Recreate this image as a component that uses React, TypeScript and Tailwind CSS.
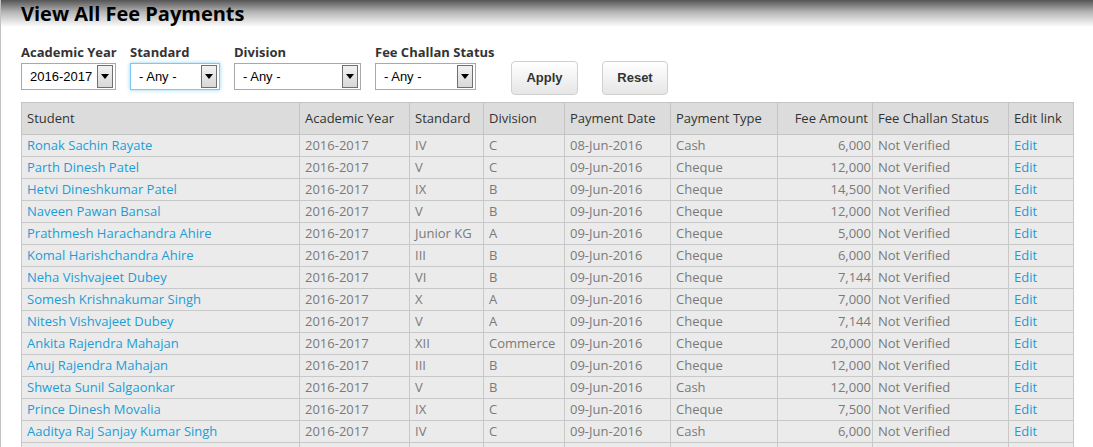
import React from 'react';

type Payment = {
  student: string;
  standard: string;
  division: string;
  date: string;
  type: string;
  amount: string;
};

const payments: Payment[] = [
  { student: 'Ronak Sachin Rayate', standard: 'IV', division: 'C', date: '08-Jun-2016', type: 'Cash', amount: '6,000' },
  { student: 'Parth Dinesh Patel', standard: 'V', division: 'C', date: '09-Jun-2016', type: 'Cheque', amount: '12,000' },
  { student: 'Hetvi Dineshkumar Patel', standard: 'IX', division: 'B', date: '09-Jun-2016', type: 'Cheque', amount: '14,500' },
  { student: 'Naveen Pawan Bansal', standard: 'V', division: 'B', date: '09-Jun-2016', type: 'Cheque', amount: '12,000' },
  { student: 'Prathmesh Harachandra Ahire', standard: 'Junior KG', division: 'A', date: '09-Jun-2016', type: 'Cheque', amount: '5,000' },
  { student: 'Komal Harishchandra Ahire', standard: 'III', division: 'B', date: '09-Jun-2016', type: 'Cheque', amount: '6,000' },
  { student: 'Neha Vishvajeet Dubey', standard: 'VI', division: 'B', date: '09-Jun-2016', type: 'Cheque', amount: '7,144' },
  { student: 'Somesh Krishnakumar Singh', standard: 'X', division: 'A', date: '09-Jun-2016', type: 'Cheque', amount: '7,000' },
  { student: 'Nitesh Vishvajeet Dubey', standard: 'V', division: 'A', date: '09-Jun-2016', type: 'Cheque', amount: '7,144' },
  { student: 'Ankita Rajendra Mahajan', standard: 'XII', division: 'Commerce', date: '09-Jun-2016', type: 'Cheque', amount: '20,000' },
  { student: 'Anuj Rajendra Mahajan', standard: 'III', division: 'B', date: '09-Jun-2016', type: 'Cheque', amount: '12,000' },
  { student: 'Shweta Sunil Salgaonkar', standard: 'V', division: 'B', date: '09-Jun-2016', type: 'Cash', amount: '12,000' },
  { student: 'Prince Dinesh Movalia', standard: 'IX', division: 'C', date: '09-Jun-2016', type: 'Cheque', amount: '7,500' },
  { student: 'Aaditya Raj Sanjay Kumar Singh', standard: 'IV', division: 'C', date: '09-Jun-2016', type: 'Cash', amount: '6,000' },
];

function SelectBox({ value, width, focused }: { value: string; width: string; focused?: boolean }) {
  return (
    <div
      className={`${width} h-[27px] flex items-center justify-between bg-white pl-2 pr-[2px] border ${
        focused ? 'border-[#7cc8ee] shadow-[0_0_4px_#8fd3f5]' : 'border-[#a9a9a9]'
      }`}
    >
      <span className="font-['Liberation_Sans',Arial,sans-serif] text-[13px] text-black">{value}</span>
      {/* classic dropdown arrow button */}
      <div className="w-[16px] h-[23px] border border-[#707070] bg-gradient-to-b from-[#f2f2f2] to-[#d8d8d8] flex items-center justify-center">
        <svg width="8" height="5" viewBox="0 0 8 5">
          <path d="M0 0h8L4 5z" fill="#000" />
        </svg>
      </div>
    </div>
  );
}

function Filter({ label, value, width, focused }: { label: string; value: string; width: string; focused?: boolean }) {
  return (
    <div className={`${width} flex flex-col gap-[2px]`}>
      <label className="text-[13px] leading-[18px] font-bold text-[#333] whitespace-nowrap">{label}</label>
      <SelectBox value={value} width={width} focused={focused} />
    </div>
  );
}

function Button({ children, width }: { children: React.ReactNode; width: string }) {
  return (
    <button
      className={`${width} mt-[18px] h-[34px] flex items-center justify-center rounded-[4px] border border-[#d0d0d0] bg-gradient-to-b from-white to-[#e6e6e6] font-['Liberation_Sans',Arial,sans-serif] text-[13px] font-bold text-[#333]`}
    >
      {children}
    </button>
  );
}

export default function App() {
  const th = 'h-[32px] border border-[#c4c4c4] px-[5px] text-left font-normal text-[#333]';
  const td = 'h-[22px] border border-[#c8c8c8] px-[5px] py-0 text-[#7a7a7a] whitespace-nowrap';

  return (
    <div className="min-h-screen bg-white bg-[linear-gradient(#555555,#b5b5b5_12px,#ffffff_27px)] bg-no-repeat font-['Open_Sans',sans-serif]">
      <div className="border-l border-[#c2c2c2] pl-[20px] pb-4">
        <h1 className="text-[20px] leading-[28px] font-bold text-black">View All Fee Payments</h1>

        {/* Filters */}
        <div className="mt-[15px] flex items-start">
          <Filter label="Academic Year" value="2016-2017" width="w-[95px]" />
          <div className="ml-[14px]">
            <Filter label="Standard" value="- Any -" width="w-[90px]" focused />
          </div>
          <div className="ml-[14px]">
            <Filter label="Division" value="- Any -" width="w-[127px]" />
          </div>
          <div className="ml-[14px]">
            <Filter label="Fee Challan Status" value="- Any -" width="w-[101px]" />
          </div>
          <div className="ml-[35px]">
            <Button width="w-[67px]">Apply</Button>
          </div>
          <div className="ml-[24px]">
            <Button width="w-[66px]">Reset</Button>
          </div>
        </div>

        {/* Payments table */}
        <table className="mt-[7px] border-collapse text-[13px] w-[1052px] table-fixed">
          <colgroup>
            <col className="w-[278px]" />
            <col className="w-[110px]" />
            <col className="w-[74px]" />
            <col className="w-[81px]" />
            <col className="w-[106px]" />
            <col className="w-[107px]" />
            <col className="w-[95px]" />
            <col className="w-[136px]" />
            <col className="w-[65px]" />
          </colgroup>
          <thead className="bg-[#dcdcdc]">
            <tr>
              <th className={th}>Student</th>
              <th className={th}>Academic Year</th>
              <th className={th}>Standard</th>
              <th className={th}>Division</th>
              <th className={th}>Payment Date</th>
              <th className={th}>Payment Type</th>
              <th className={`${th} text-right pr-[4px]`}>Fee Amount</th>
              <th className={th}>Fee Challan Status</th>
              <th className={th}>Edit link</th>
            </tr>
          </thead>
          <tbody className="bg-[#ebebeb]">
            {payments.map((p, i) => (
              <tr key={i}>
                <td className={td}>
                  <a href="#" className="text-[#1b9dd6]">{p.student}</a>
                </td>
                <td className={td}>2016-2017</td>
                <td className={td}>{p.standard}</td>
                <td className={td}>{p.division}</td>
                <td className={td}>{p.date}</td>
                <td className={td}>{p.type}</td>
                <td className={`${td} text-right pr-px`}>{p.amount}</td>
                <td className={td}>Not Verified</td>
                <td className={td}>
                  <a href="#" className="text-[#1b9dd6]">Edit</a>
                </td>
              </tr>
            ))}
            {/* next row, starting at the bottom edge */}
            <tr>
              {Array.from({ length: 9 }).map((_, i) => (
                <td key={i} className={td}></td>
              ))}
            </tr>
          </tbody>
        </table>
      </div>
    </div>
  );
}
